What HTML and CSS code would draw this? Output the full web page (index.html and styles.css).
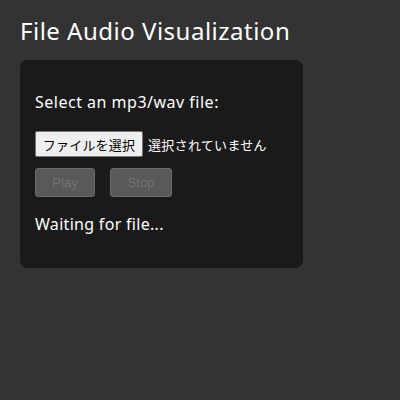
FILE: index.html
```html
<!DOCTYPE html>
<html lang="en">
<head>
<meta charset="utf-8">
<title>File Audio Visualization</title>
<link rel="stylesheet" href="styles.css">
</head>
<body>
<h1 class="title">File Audio Visualization</h1>
<div class="card">
  <p class="label">Select an mp3/wav file:</p>
  <div class="file-row">
    <button class="file-btn" type="button">ファイルを選択</button>
    <span class="file-name">選択されていません</span>
  </div>
  <div class="controls">
    <button class="ctrl" type="button" disabled>Play</button>
    <button class="ctrl" type="button" disabled>Stop</button>
  </div>
  <p class="status">Waiting for file...</p>
</div>
</body>
</html>
```
FILE: styles.css
```css
html, body {
  margin: 0;
  padding: 0;
}
body {
  background: #333333;
  color: #ffffff;
  font-family: "Noto Sans", "Noto Sans CJK JP", sans-serif;
  padding: 17px 20px;
  height: 400px;
  box-sizing: border-box;
}
.title {
  font-size: 24px;
  font-weight: normal;
  line-height: 28px;
  letter-spacing: 0.5px;
  margin: 0 0 15px 0;
}
.card {
  width: 283px;
  box-sizing: border-box;
  background: #1a1a1a;
  border-radius: 8px;
  padding: 32px 15px 34px 15px;
  display: flex;
  flex-direction: column;
}
.label {
  margin: 0;
  font-size: 16px;
  line-height: 20px;
  letter-spacing: 0.5px;
}
.file-row {
  margin-top: 19px;
  display: flex;
  align-items: center;
  gap: 5px;
}
.file-btn {
  height: 26px;
  width: 108px;
  padding: 0;
  background: #efefef;
  border: 1px solid #767676;
  border-radius: 2px;
  color: #000;
  font-family: "Noto Sans CJK JP", sans-serif;
  font-size: 13px;
  letter-spacing: 0.2px;
}
.file-name {
  font-family: "Noto Sans CJK JP", sans-serif;
  font-size: 13px;
  letter-spacing: 0.3px;
  color: #fff;
}
.controls {
  margin-top: 11px;
  display: flex;
  gap: 15px;
}
.ctrl {
  width: 60px;
  height: 29px;
  padding: 0;
  background: #595959;
  border: 1px solid #6b6b6b;
  border-radius: 3px;
  color: #737373;
  font-family: "Liberation Sans", sans-serif;
  font-size: 13px;
}
.ctrl + .ctrl {
  width: 62px;
}
.status {
  margin: 17px 0 0 0;
  font-size: 16px;
  line-height: 20px;
  letter-spacing: 0.3px;
}
```
